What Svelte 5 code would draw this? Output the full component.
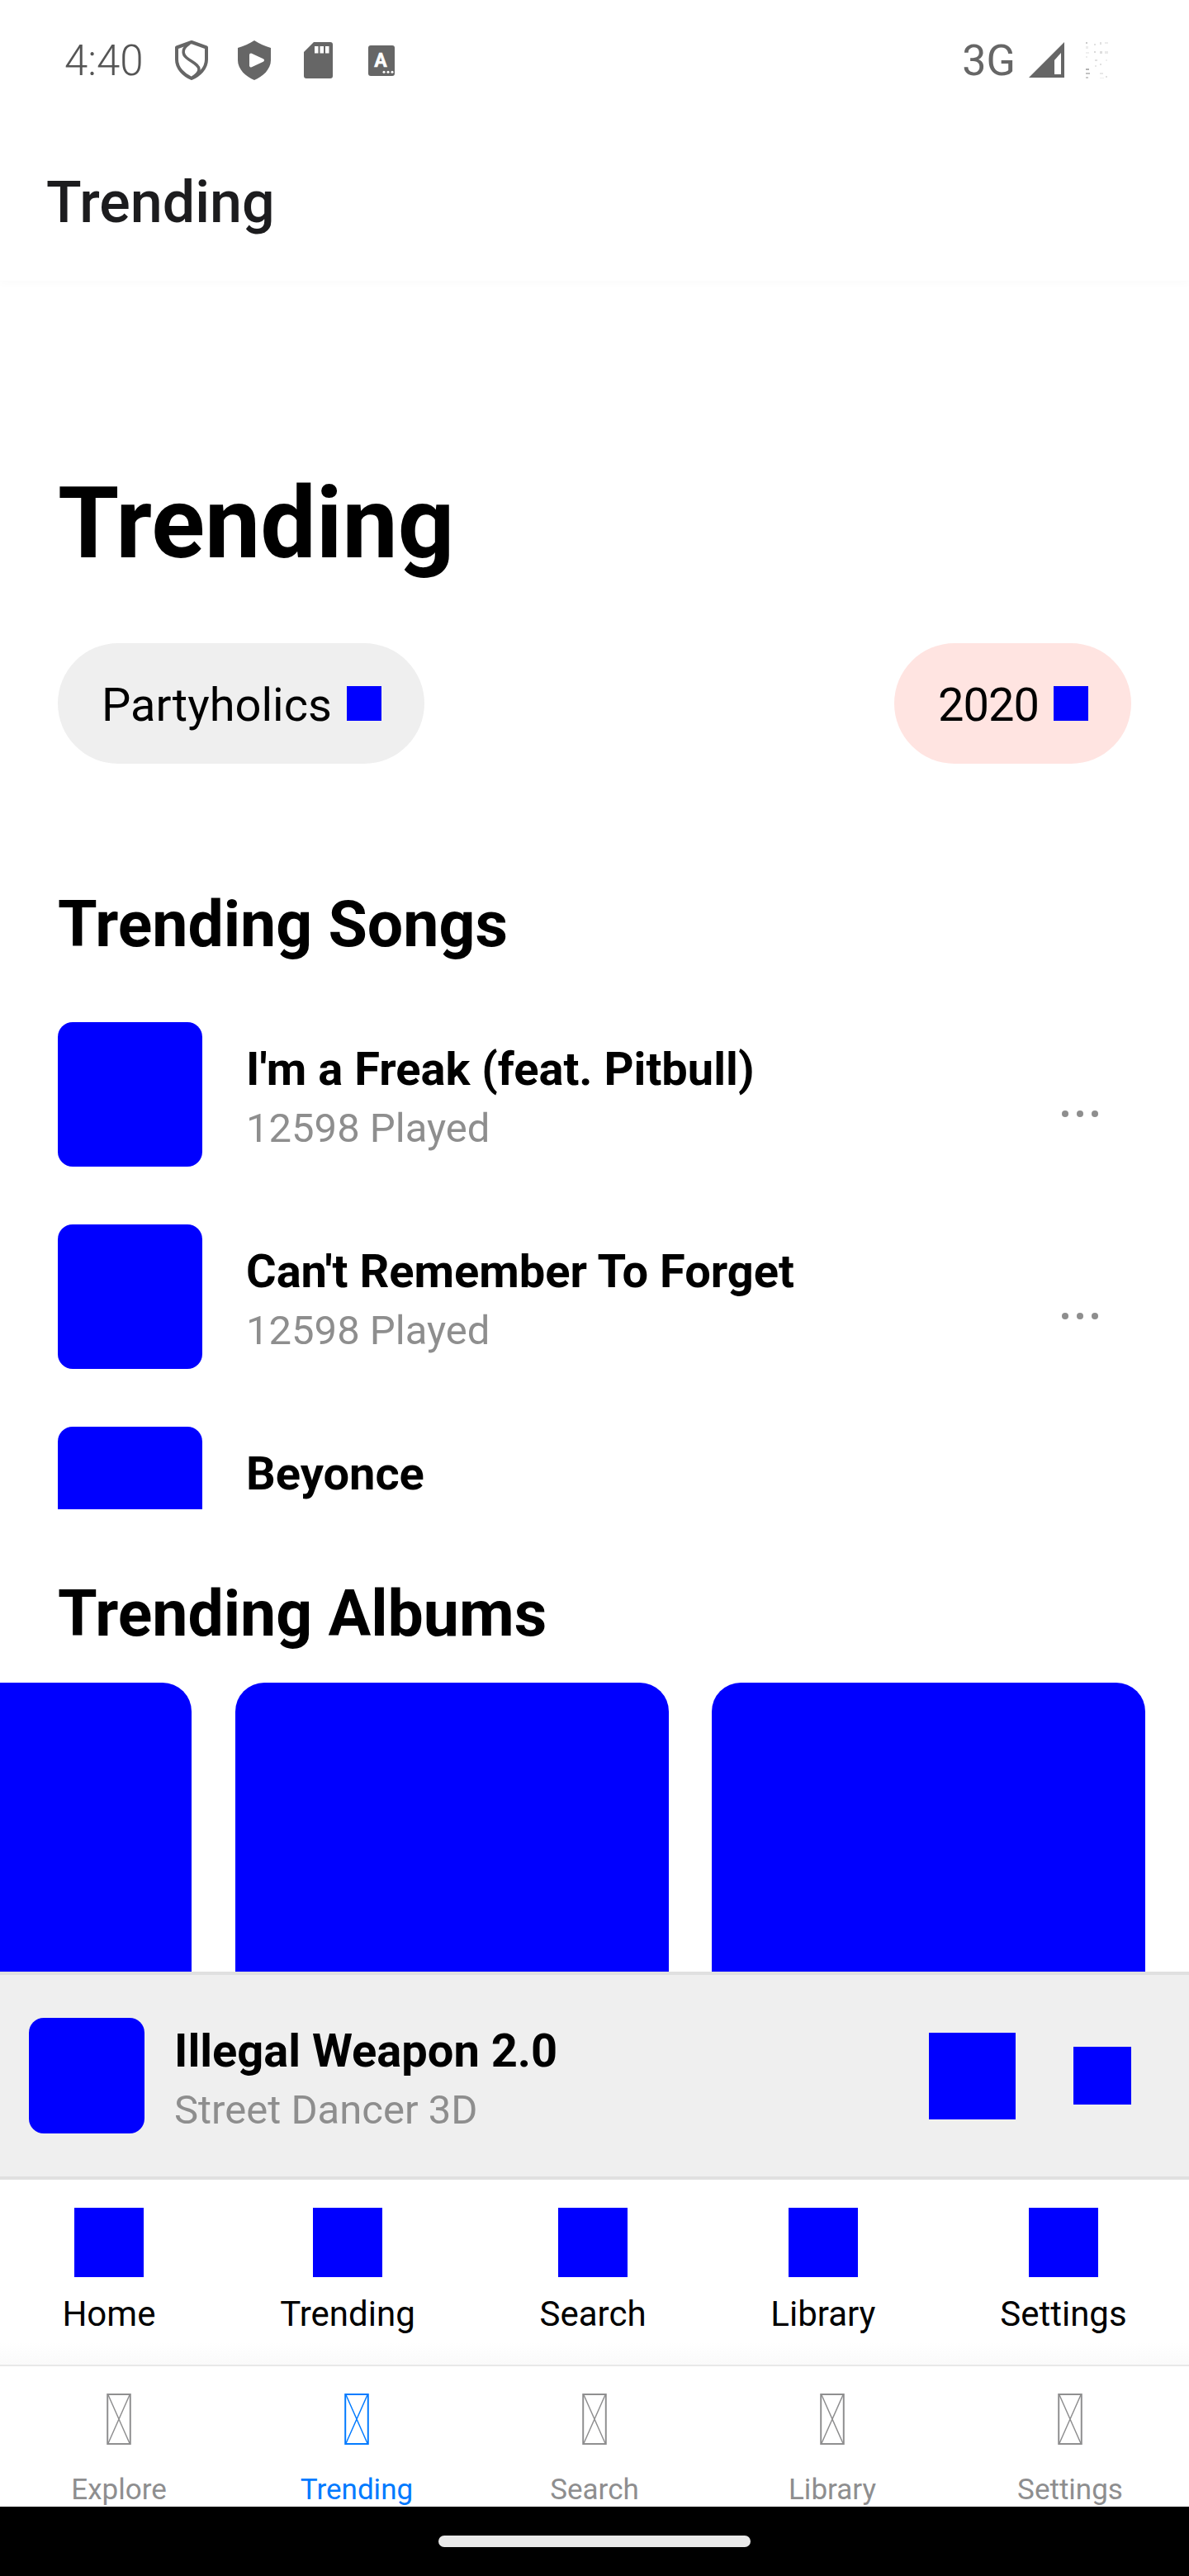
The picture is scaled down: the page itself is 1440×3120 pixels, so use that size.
<script>
  // rows in the song list, the third one gets cut off by the list height
  const songs = [
    { title: "I'm a Freak (feat. Pitbull)", played: '12598 Played' },
    { title: "Can't Remember To Forget", played: '12598 Played' },
    { title: 'Beyonce', played: '12598 Played' }
  ];

  const mainTabs = ['Home', 'Trending', 'Search', 'Library', 'Settings'];
  const bottomTabs = ['Explore', 'Trending', 'Search', 'Library', 'Settings'];

  // faint leftovers where the battery icon should be
  const specks = [
    [0, 0, 2, 2, 0.35], [0, 5, 3, 3, 0.12], [10, 2, 2, 2, 0.2], [17, 0, 2, 3, 0.2], [23, 0, 4, 2, 0.12],
    [10, 11, 2, 2, 0.25], [17, 11, 3, 3, 0.22], [23, 11, 4, 3, 0.14], [0, 12, 4, 2, 0.1],
    [0, 17, 2, 2, 0.12], [11, 21, 3, 2, 0.2], [24, 21, 2, 2, 0.1], [11, 28, 2, 2, 0.15], [17, 26, 2, 2, 0.2],
    [0, 32, 4, 2, 0.5], [0, 37, 5, 2, 0.4], [0, 42, 3, 2, 0.35], [17, 37, 4, 2, 0.15], [24, 41, 2, 2, 0.2], [17, 43, 5, 1, 0.1]
  ];
</script>

<div class="phone">
  <header class="top">
    <div class="status">
      <span class="time">4:40</span>
      <div class="status-icons">
        <svg viewBox="0 0 48 48" width="48" height="48">
          <path d="M24 2 L42 8.500 V23 C42 34 33 42 24 46 C15 42 6 34 6 23 V8.500 Z" fill="none" stroke="#666" stroke-width="4" stroke-linejoin="round" />
          <path d="M21 4 C13 9 12 16 18 21 C24 26 33 29 33 35 C33 39 28 43 25 45" fill="none" stroke="#666" stroke-width="3.500" />
        </svg>
        <svg viewBox="0 0 48 48" width="48" height="48">
          <path d="M22 0 C28 4 35 7 42 9 V24 C42 35 32 44 22 48 C12 44 2 35 2 24 V9 C9 7 16 4 22 0 Z" fill="#666" />
          <path d="M18 17.500 L32 24 L18 30.500 Z" fill="#fff" stroke="#fff" stroke-width="4" stroke-linejoin="round" />
        </svg>
        <svg viewBox="0 0 48 48" width="48" height="48">
          <path d="M16 2 H36 a3 3 0 0 1 3 3 V43 a3 3 0 0 1 -3 3 H7 a3 3 0 0 1 -3 -3 V14 Z" fill="#666" />
          <rect x="17" y="7" width="4.500" height="8.500" fill="#fff" />
          <rect x="23.500" y="7" width="4.500" height="8.500" fill="#fff" />
          <rect x="30" y="7" width="4.500" height="8.500" fill="#fff" />
        </svg>
        <svg viewBox="0 0 48 48" width="48" height="48">
          <rect x="4" y="6" width="32" height="37" rx="3" fill="#666" />
          <text x="19" y="32" text-anchor="middle" class="tile-letter">A</text>
          <circle cx="23" cy="38.300" r="1.500" fill="#fff" />
          <circle cx="28" cy="38.300" r="1.500" fill="#fff" />
          <circle cx="33" cy="38.300" r="1.500" fill="#fff" />
        </svg>
      </div>
      <div class="status-right">
        <span class="network">3G</span>
        <svg viewBox="0 0 44 44" width="44" height="44">
          <path d="M0 43 L43 0 V43 Z" fill="#666" />
          <path d="M31 39 V22 L39 13 V39 Z" fill="#fff" />
        </svg>
        <svg viewBox="0 0 27 45" width="27" height="45">
          {#each specks as [x, y, w, h, o]}
            <rect {x} {y} width={w} height={h} fill="#666" opacity={o} />
          {/each}
        </svg>
      </div>
    </div>
    <div class="appbar">Trending</div>
  </header>

  <main class="content">
    <h1>Trending</h1>

    <div class="filters">
      <div class="pill">
        <span>Partyholics</span>
        <i class="square"></i>
      </div>
      <div class="pill pink">
        <span>2020</span>
        <i class="square"></i>
      </div>
    </div>

    <h2 class="songs-title">Trending Songs</h2>
    <div class="song-list">
      {#each songs as song}
        <div class="song">
          <div class="thumb"></div>
          <div class="song-text">
            <div class="song-name">{song.title}</div>
            <div class="song-sub">{song.played}</div>
          </div>
          <div class="dots"><b></b><b></b><b></b></div>
        </div>
      {/each}
    </div>

    <h2 class="albums-title">Trending Albums</h2>
    <div class="albums">
      <div class="album"></div>
      <div class="album"></div>
      <div class="album"></div>
    </div>
  </main>

  <section class="player">
    <div class="player-thumb"></div>
    <div class="player-text">
      <div class="song-name">Illegal Weapon 2.0</div>
      <div class="song-sub">Street Dancer 3D</div>
    </div>
    <div class="play-btn"></div>
    <div class="next-btn"></div>
  </section>

  <nav class="tabs">
    {#each mainTabs as tab}
      <div class="tab">
        <div class="tab-icon"></div>
        <span>{tab}</span>
      </div>
    {/each}
  </nav>

  <nav class="bottom-tabs">
    {#each bottomTabs as tab, i}
      <div class="bottom-tab" class:active={i === 1}>
        <svg viewBox="0 0 30 63" width="30" height="63">
          <rect x="1" y="1" width="28" height="61" fill="none" stroke="currentColor" stroke-width="2" />
          <path d="M1.500 1 L28.500 62 M28.500 1 L1.500 62" fill="none" stroke="currentColor" stroke-width="1.500" />
        </svg>
        <span>{tab}</span>
      </div>
    {/each}
  </nav>

  <div class="navbar"><div class="home-pill"></div></div>
</div>

<style>
  :global(body) {
    margin: 0;
    background: #fff;
  }

  .phone {
    width: 1440px;
    height: 3120px;
    display: flex;
    flex-direction: column;
    overflow: hidden;
    font-family: Roboto, sans-serif;
    color: #000;
    background: #fff;
  }

  .top {
    height: 340px;
    flex-shrink: 0;
    box-shadow: 0 4px 10px rgba(0, 0, 0, 0.02);
    position: relative;
  }

  .status {
    height: 146px;
    display: flex;
    align-items: center;
    padding: 0 98px 0 78px;
    color: #666;
  }

  .time {
    width: 93px;
    font-size: 51px;
    font-weight: 300;
    color: #555;
    white-space: nowrap;
  }

  .status-icons {
    display: flex;
    gap: 30px;
    margin-left: 37px;
  }

  .tile-letter {
    font-size: 23px;
    font-weight: 700;
    fill: #fff;
    stroke: #fff;
    stroke-width: 0.5px;
    font-family: Roboto, sans-serif;
  }

  .status-right {
    margin-left: auto;
    display: flex;
    align-items: center;
    gap: 16px;
  }

  .status-right svg:last-child {
    margin-left: 9px;
  }

  .network {
    font-size: 52px;
    font-weight: 400;
    color: #666;
  }

  .appbar {
    padding-left: 56px;
    font-size: 70px;
    font-weight: 500;
    line-height: 82px;
    margin-top: 58px;
    color: #1c1c1e;
  }

  .content {
    flex: 1;
    min-height: 0;
    overflow: hidden;
  }

  h1 {
    margin: 224px 0 0;
    padding-left: 70px;
    font-size: 120px;
    font-weight: 700;
    line-height: 140px;
  }

  .filters {
    display: flex;
    justify-content: space-between;
    padding: 0 70px;
    margin-top: 75px;
  }

  .pill {
    height: 146px;
    border-radius: 73px;
    background: #efefef;
    padding: 0 52px 0 53px;
    display: flex;
    align-items: center;
    gap: 18px;
    font-size: 56px;
  }

  .pill span {
    padding-top: 3px;
  }

  .pink {
    background: #ffe4e1;
    letter-spacing: -1px;
  }

  .square {
    width: 42px;
    height: 42px;
    background: #00f;
  }

  h2 {
    margin: 0;
    padding-left: 70px;
    font-size: 77px;
    font-weight: 700;
    line-height: 90px;
  }

  .songs-title {
    margin-top: 150px;
  }

  .song-list {
    height: 590px;
    margin-top: 73px;
    padding: 0 70px;
    overflow: hidden;
  }

  .song {
    height: 175px;
    margin-bottom: 70px;
    display: flex;
    align-items: center;
  }

  .thumb {
    width: 175px;
    height: 175px;
    border-radius: 18px;
    background: #00f;
    flex-shrink: 0;
  }

  .song-text {
    margin: 6px 0 0 53px;
    flex: 1;
  }

  .song-name {
    font-size: 56px;
    font-weight: 700;
    line-height: 66px;
  }

  .song-sub {
    font-size: 49px;
    line-height: 57px;
    margin-top: 10px;
    color: #8e8e8e;
  }

  .dots {
    display: flex;
    gap: 10px;
    margin: 47px 40px 0 0;
  }

  .dots b {
    width: 8px;
    height: 8px;
    border-radius: 50%;
    background: #8e8e8e;
  }

  .albums-title {
    margin-top: 82px;
  }

  .albums {
    display: flex;
    gap: 52.5px;
    margin: 38px 0 0 -293px;
  }

  .album {
    width: 525px;
    height: 525px;
    flex-shrink: 0;
    border-radius: 35px;
    background: #00f;
  }

  .player {
    height: 252px;
    flex-shrink: 0;
    box-sizing: border-box;
    background: #efefef;
    border-top: 4px solid #e0e0e0;
    border-bottom: 4px solid #e0e0e0;
    display: flex;
    align-items: center;
    padding: 0 70px 0 35px;
  }

  .player-thumb {
    width: 140px;
    height: 140px;
    border-radius: 18px;
    background: #00f;
  }

  .player-text {
    margin: 6px 0 0 36px;
    flex: 1;
  }

  .play-btn {
    width: 105px;
    height: 105px;
    background: #00f;
  }

  .next-btn {
    width: 70px;
    height: 70px;
    margin-left: 70px;
    background: #00f;
  }

  .tabs {
    height: 226px;
    flex-shrink: 0;
    box-sizing: border-box;
    padding-top: 34px;
    display: flex;
    justify-content: space-around;
    border-bottom: 2px solid #e8e8e8;
    background: linear-gradient(#fff 88%, #fafafa);
  }

  .tab {
    display: flex;
    flex-direction: column;
    align-items: center;
    gap: 20px;
    font-size: 42px;
    line-height: 49px;
  }

  .tab-icon {
    width: 84px;
    height: 84px;
    background: #00f;
  }

  .bottom-tabs {
    height: 170px;
    flex-shrink: 0;
    display: flex;
    overflow: hidden;
  }

  .bottom-tab {
    flex: 1;
    display: flex;
    flex-direction: column;
    align-items: center;
    padding-top: 33px;
    color: #8e8e8f;
    font-size: 35px;
    line-height: 41px;
  }

  .bottom-tab svg {
    display: block;
    margin-bottom: 34px;
  }

  .active {
    color: #007aff;
  }

  .navbar {
    height: 84px;
    flex-shrink: 0;
    box-sizing: border-box;
    background: #000;
    display: flex;
    justify-content: center;
    padding-top: 35px;
  }

  .home-pill {
    width: 378px;
    height: 14px;
    border-radius: 7px;
    background: #e9e9e9;
  }
</style>
